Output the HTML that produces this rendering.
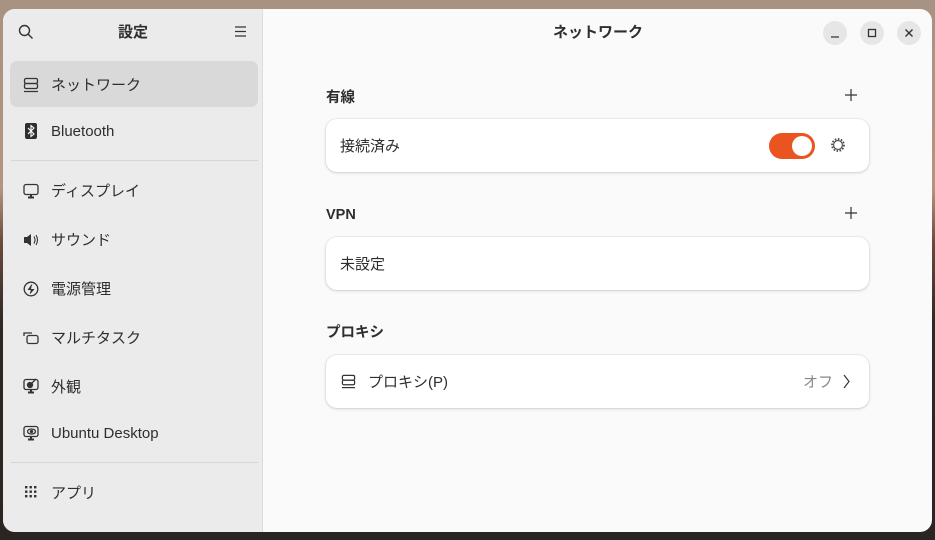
<!DOCTYPE html>
<html><head><meta charset="utf-8"><style>
*{margin:0;padding:0;box-sizing:border-box}
body{width:935px;height:540px;overflow:hidden;background:linear-gradient(180deg,#a89282 0%,#b49480 35%,#6a4a3c 45%,#2e2824 60%,#2a2522 100%);font-family:"Liberation Sans","Noto Sans CJK JP",sans-serif;color:#2e2e2e;position:relative}
.win{position:absolute;left:3px;top:9px;width:929px;height:523px;border-radius:12px;overflow:hidden;background:#fafafa}
.side{position:absolute;left:0;top:0;width:260px;height:100%;background:#ebebeb;border-right:1px solid #dcdcdc}
.t{position:absolute;font-size:15px;white-space:nowrap;line-height:20px;margin-top:1px}
.item{position:absolute;left:7px;width:248px;height:46px;border-radius:7px}
.ic{position:absolute}
.sep{position:absolute;left:8px;width:247px;height:1px;background:#d6d6d6}
.card{position:absolute;left:323px;width:543px;background:#fff;border-radius:11px;box-shadow:0 1px 3px rgba(0,0,0,.15),0 0 0 1px rgba(0,0,0,.04)}
.h{position:absolute;font-size:14.5px;font-weight:bold;line-height:18px;margin-top:1px}
.btn{position:absolute;top:12px;width:24px;height:24px;border-radius:12px;background:#e6e6e6}
</style></head><body>
<div class="win">
<div class="side">
<svg class="ic" style="left:15px;top:15px" width="16" height="16" viewBox="0 0 16 16" fill="none" stroke="#333" stroke-width="1.4"><circle cx="6.5" cy="6.5" r="5"/><path d="M10 10l4.5 4.5"/></svg>
<div class="t" style="left:115px;top:13px;font-weight:bold;font-size:15px">設定</div>
<svg class="ic" style="left:232px;top:17px" width="12" height="11" viewBox="0 0 12 11" stroke="#333" stroke-width="1.2"><path d="M0 1h11M0 5.5h11M0 10h11"/></svg>
<div class="item" style="top:52px;background:#d9d9d9"></div>
<svg class="ic" style="left:20px;top:68px" width="16" height="16" viewBox="0 0 16 16" fill="none" stroke="#333" stroke-width="1.3"><rect x="1.5" y="1.5" width="13" height="5" rx="1.5"/><rect x="1.5" y="6.5" width="13" height="5" rx="1.5"/><path d="M1 14.5h14"/></svg>
<div class="t" style="left:48px;top:66px">ネットワーク</div>
<svg class="ic" style="left:22px;top:114px" width="12" height="16" viewBox="0 0 12 16"><rect width="12" height="16" rx="2" fill="#2e2e2e"/><path d="M3 5l6 6-3 2.5V2.5l3 2.5-6 6" fill="none" stroke="#fff" stroke-width="1.1"/></svg>
<div class="t" style="left:48px;top:112px">Bluetooth</div>
<div class="sep" style="top:151px"></div>
<svg class="ic" style="left:20px;top:174px" width="16" height="16" viewBox="0 0 16 16" fill="none" stroke="#333" stroke-width="1.3"><rect x="1" y="1.5" width="14" height="10" rx="2"/><path d="M5 14.5h6M8 11.5v3" stroke-width="2"/></svg>
<div class="t" style="left:48px;top:172px">ディスプレイ</div>
<svg class="ic" style="left:20px;top:224px" width="16" height="14" viewBox="0 0 16 14"><path d="M1 4h3l4-3v12l-4-3H1z" fill="#333"/><path d="M11 3.5q2 3.5 0 7M13 2q3 5 0 10" fill="none" stroke="#333" stroke-width="1.1"/></svg>
<div class="t" style="left:48px;top:221px">サウンド</div>
<svg class="ic" style="left:20px;top:272px" width="16" height="16" viewBox="0 0 16 16" fill="none" stroke="#333" stroke-width="1.3"><circle cx="8" cy="8" r="6.8"/><path d="M9 3.5L5.5 8.5h5L7 12.5" fill="#333" stroke-width="1"/></svg>
<div class="t" style="left:48px;top:270px">電源管理</div>
<svg class="ic" style="left:20px;top:322px" width="16" height="14" viewBox="0 0 16 14" fill="none" stroke="#333" stroke-width="1.3"><path d="M1 5V2h8"/><rect x="4" y="4.5" width="11" height="8" rx="2"/></svg>
<div class="t" style="left:48px;top:319px">マルチタスク</div>
<svg class="ic" style="left:20px;top:369px" width="16" height="16" viewBox="0 0 16 16" fill="none" stroke="#333" stroke-width="1.3"><rect x="1" y="1.5" width="14" height="10" rx="2"/><path d="M5 14.5h6M8 11.5v3" stroke-width="2"/><circle cx="7" cy="7" r="2.5" fill="#333"/><path d="M8 6l5-5"/></svg>
<div class="t" style="left:48px;top:368px">外観</div>
<svg class="ic" style="left:20px;top:416px" width="16" height="16" viewBox="0 0 16 16" fill="none" stroke="#333" stroke-width="1.3"><rect x="1" y="1.5" width="14" height="10" rx="2"/><path d="M5 14.5h6M8 11.5v3" stroke-width="2"/><ellipse cx="8.5" cy="6.5" rx="4" ry="2.5"/><circle cx="8.5" cy="6.5" r="1" fill="#333"/></svg>
<div class="t" style="left:48px;top:414px">Ubuntu Desktop</div>
<div class="sep" style="top:453px"></div>
<svg class="ic" style="left:22px;top:477px" width="12" height="12" viewBox="0 0 12 12" fill="#333"><rect x="0" y="0" width="2.4" height="2.4"/><rect x="4.5" y="0" width="2.4" height="2.4"/><rect x="9" y="0" width="2.4" height="2.4"/><rect x="0" y="4.5" width="2.4" height="2.4"/><rect x="4.5" y="4.5" width="2.4" height="2.4"/><rect x="9" y="4.5" width="2.4" height="2.4"/><rect x="0" y="9" width="2.4" height="2.4"/><rect x="4.5" y="9" width="2.4" height="2.4"/><rect x="9" y="9" width="2.4" height="2.4"/></svg>
<div class="t" style="left:48px;top:474px">アプリ</div>
</div>
<div class="t" style="left:550px;top:13px;font-weight:bold">ネットワーク</div>
<div class="btn" style="left:820px"><svg width="24" height="24"><path d="M8 16h8" stroke="#333" stroke-width="1.3"/></svg></div>
<div class="btn" style="left:857px"><svg width="24" height="24"><rect x="8.5" y="8.5" width="7" height="7" fill="none" stroke="#333" stroke-width="1.3"/></svg></div>
<div class="btn" style="left:894px"><svg width="24" height="24"><path d="M8.5 8.5l7 7M15.5 8.5l-7 7" stroke="#333" stroke-width="1.4"/></svg></div>
<div class="h" style="left:323px;top:79px">有線</div>
<svg class="ic" style="left:842px;top:80px" width="12" height="12" stroke="#333" stroke-width="1.2"><path d="M6 0v12M0 6h12"/></svg>
<div class="card" style="top:110px;height:53px">
<div class="t" style="left:14px;top:17px">接続済み</div>
<div style="position:absolute;left:443px;top:14px;width:46px;height:26px;border-radius:13px;background:#e95420"><div style="position:absolute;right:3px;top:3px;width:20px;height:20px;border-radius:10px;background:#fff"></div></div>
<svg class="ic" style="left:504px;top:18px" width="16" height="16" viewBox="0 0 16 16" fill="none" stroke="#444"><circle cx="8" cy="8" r="6" stroke-dasharray="1.6 1.5" stroke-width="1.8"/><circle cx="8" cy="8" r="4.4" stroke-width="1.1"/></svg>
</div>
<div class="h" style="left:323px;top:196px">VPN</div>
<svg class="ic" style="left:842px;top:198px" width="12" height="12" stroke="#333" stroke-width="1.2"><path d="M6 0v12M0 6h12"/></svg>
<div class="card" style="top:228px;height:53px">
<div class="t" style="left:14px;top:17px">未設定</div>
</div>
<div class="h" style="left:323px;top:314px">プロキシ</div>
<div class="card" style="top:346px;height:53px">
<svg class="ic" style="left:15px;top:19px" width="15" height="15" viewBox="0 0 16 16" fill="none" stroke="#333" stroke-width="1.3"><rect x="1.5" y="1.5" width="13" height="5" rx="1.5"/><rect x="1.5" y="6.5" width="13" height="5" rx="1.5"/><path d="M1 14.5h14"/></svg>
<div class="t" style="left:42px;top:17px">プロキシ(P)</div>
<div class="t" style="left:477px;top:17px;color:#888">オフ</div>
<svg class="ic" style="left:517px;top:19px" width="8" height="15" fill="none" stroke="#333" stroke-width="1.2"><path d="M1 1l5 6.5L1 14"/></svg>
</div>
</div>
</body></html>
